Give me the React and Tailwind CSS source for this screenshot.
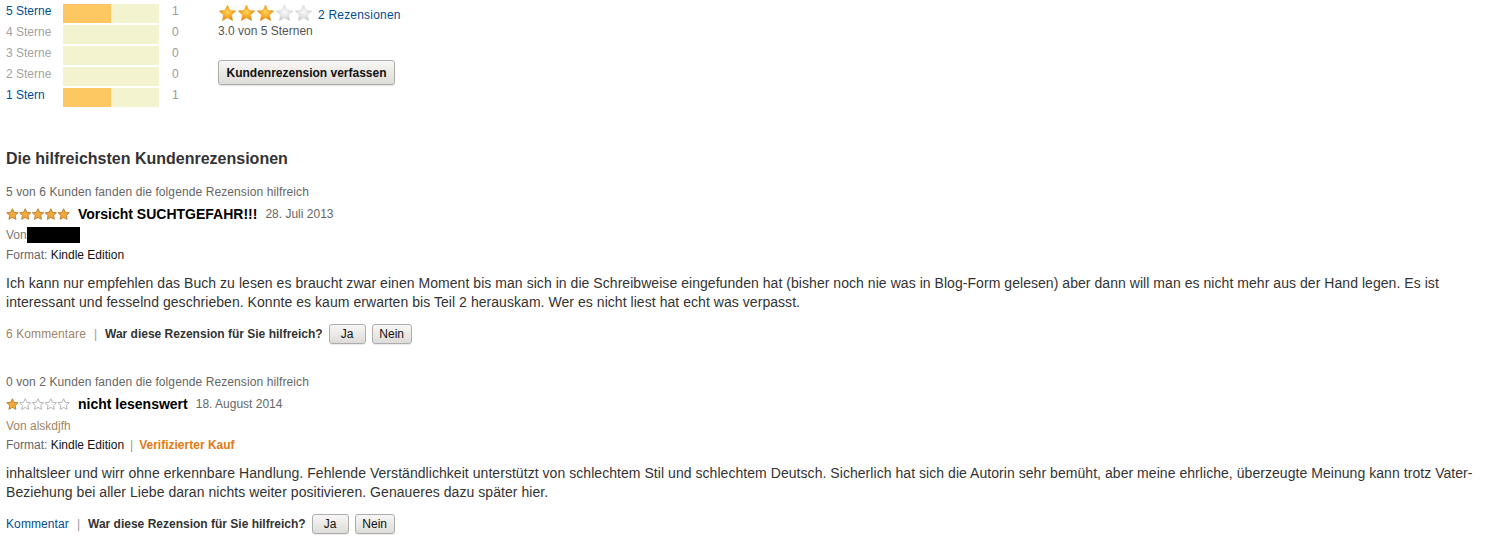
import React from 'react';

const STAR = 'M12 1.2l3.2 6.7 7.4.8-5.5 5.1 1.5 7.3L12 17.5l-6.6 3.6 1.5-7.3-5.5-5.1 7.4-.8z';

const histogram = [
    { label: '5 Sterne', count: 1, pct: 50 },
    { label: '4 Sterne', count: 0, pct: 0 },
    { label: '3 Sterne', count: 0, pct: 0 },
    { label: '2 Sterne', count: 0, pct: 0 },
    { label: '1 Stern', count: 1, pct: 50 },
];

const reviews = [
    {
        id: 1,
        helpful: '5 von 6 Kunden fanden die folgende Rezension hilfreich',
        rating: 5,
        title: 'Vorsicht SUCHTGEFAHR!!!',
        date: '28. Juli 2013',
        author: null,
        verified: false,
        body: 'Ich kann nur empfehlen das Buch zu lesen es braucht zwar einen Moment bis man sich in die Schreibweise eingefunden hat (bisher noch nie was in Blog-Form gelesen) aber dann will man es nicht mehr aus der Hand legen. Es ist interessant und fesselnd geschrieben. Konnte es kaum erwarten bis Teil 2 herauskam. Wer es nicht liest hat echt was verpasst.',
        comments: '6 Kommentare',
    },
    {
        id: 2,
        helpful: '0 von 2 Kunden fanden die folgende Rezension hilfreich',
        rating: 1,
        title: 'nicht lesenswert',
        date: '18. August 2014',
        author: 'alskdjfh',
        verified: true,
        body: 'inhaltsleer und wirr ohne erkennbare Handlung. Fehlende Verständlichkeit unterstützt von schlechtem Stil und schlechtem Deutsch. Sicherlich hat sich die Autorin sehr bemüht, aber meine ehrliche, überzeugte Meinung kann trotz Vater-Beziehung bei aller Liebe daran nichts weiter positivieren. Genaueres dazu später hier.',
        comments: null,
    },
];

// big gradient stars next to the summary
const BigStars = ({ value }) => (
    <svg width="95" height="19" viewBox="0 0 120 24">
        <defs>
            <radialGradient id="bigOn" cx="50%" cy="45%" r="55%">
                <stop offset="0%" stopColor="#fdd55a" />
                <stop offset="60%" stopColor="#f5a623" />
                <stop offset="100%" stopColor="#d9820f" />
            </radialGradient>
            <radialGradient id="bigOff" cx="50%" cy="45%" r="55%">
                <stop offset="0%" stopColor="#fafafa" />
                <stop offset="60%" stopColor="#e2e2e2" />
                <stop offset="100%" stopColor="#c4c4c4" />
            </radialGradient>
        </defs>
        {[0, 1, 2, 3, 4].map(i => (
            <path key={i} d={STAR} transform={`translate(${i * 24} 0)`}
                fill={i < value ? 'url(#bigOn)' : 'url(#bigOff)'}
                stroke={i < value ? '#e0a030' : '#d4d4d4'} strokeWidth="0.6" />
        ))}
    </svg>
);

// small outlined stars in each review
const SmallStars = ({ value }) => (
    <svg width="64" height="13" viewBox="0 0 120 24">
        {[0, 1, 2, 3, 4].map(i => (
            <path key={i} d={STAR} transform={`translate(${i * 24} 0)`}
                fill={i < value ? '#f2a93b' : '#ffffff'}
                stroke={i < value ? '#b5772a' : '#a8a8a8'} strokeWidth="1.6" strokeLinejoin="round" />
        ))}
    </svg>
);

const Btn = ({ children, className = '' }) => (
    <button className={`h-[20px] rounded-[3px] border border-[#adadad] bg-linear-to-b from-[#f8f7f5] to-[#dedcd7] text-[12px] leading-[18px] text-[#111] shadow-[0_1px_0_rgba(0,0,0,0.08)] ${className}`}>
        {children}
    </button>
);

const Review = ({ review, className = '' }) => (
    <div className={className}>
        <div className="h-[20px] leading-[20px] text-[12px] tracking-[0.1px] text-[#666]">{review.helpful}</div>
        <div className="mt-[1px] flex h-[22px] items-center">
            <SmallStars value={review.rating} />
            <span className="ml-[8px] text-[14px] font-bold text-black">{review.title}</span>
            <span className="ml-[8px] text-[12px] text-[#666]">{review.date}</span>
        </div>
        <div className="flex h-[20px] items-center text-[12px]">
            {review.author ? (
                <span className="mt-[2px] text-[#a08463]">Von {review.author}</span>
            ) : (
                <>
                    <span className="text-[#777]">Von</span>
                    <span className="inline-block h-[16px] w-[53px] bg-black" />
                </>
            )}
        </div>
        <div className="h-[20px] leading-[20px] text-[12px]">
            <span className="text-[#666]">Format: </span>
            <span className="text-[#111]">Kindle Edition</span>
            {review.verified && (
                <>
                    <span className="mx-[6px] text-[#999]">|</span>
                    <span className="font-bold text-[#e47911]">Verifizierter Kauf</span>
                </>
            )}
        </div>
        <p className="mt-[9px] text-[14px] leading-[19px] tracking-[0.05px] text-[#333]">{review.body}</p>
        <div className="mt-[12px] flex h-[20px] items-center text-[12px]">
            {review.comments
                ? <span className="tracking-[0.1px] text-[#a08463]">{review.comments}</span>
                : <span className="tracking-[0.1px] text-[#004b91]">Kommentar</span>}
            <span className="mx-[8px] text-[#999]">|</span>
            <span className="font-bold text-[#333]">War diese Rezension für Sie hilfreich?</span>
            <Btn className="ml-[6px] w-[37px]">Ja</Btn>
            <Btn className="ml-[6px] w-[40px]">Nein</Btn>
        </div>
    </div>
);

const App = () => {
    return (
        <div className="min-h-[539px] bg-white px-[6px] font-['Liberation_Sans',Arial,sans-serif]">
            <div className="flex pt-[4px]">
                <div className="flex w-[212px] flex-col gap-[2px]">
                    {histogram.map(row => (
                        <div key={row.label} className="flex h-[19px] items-start text-[12px] leading-[14px]">
                            <span className={`w-[57px] ${row.count ? 'text-[#004b91]' : 'text-[#a3a3a3]'}`}>{row.label}</span>
                            <div className="h-[19px] w-[96px] bg-[#f3f3d0]">
                                <div className="h-full bg-[#fdc862]" style={{ width: `${row.pct}%` }} />
                            </div>
                            <span className="ml-[13px] text-[#999]">{row.count}</span>
                        </div>
                    ))}
                </div>
                <div className="flex flex-col">
                    <div className="flex h-[19px] items-center">
                        <BigStars value={3} />
                        <span className="ml-[5px] mt-[2px] text-[12px] tracking-[0.2px] text-[#004b91]">2 Rezensionen</span>
                    </div>
                    <div className="mt-[1px] text-[12px] leading-[14px] text-[#555]">3.0 von 5 Sternen</div>
                    <button className="mt-[22px] h-[25px] w-[177px] rounded-[3px] border border-[#adadad] bg-linear-to-b from-[#f8f7f5] to-[#dedcd7] text-[12px] font-bold text-[#111] shadow-[0_1px_1px_rgba(0,0,0,0.12)]">
                        Kundenrezension verfassen
                    </button>
                </div>
            </div>

            <h2 className="mt-[42px] text-[16px] font-bold leading-[20px] text-[#333]">Die hilfreichsten Kundenrezensionen</h2>

            <Review review={reviews[0]} className="mt-[13px]" />
            <Review review={reviews[1]} className="mt-[28px]" />
        </div>
    );
};

export default App;
